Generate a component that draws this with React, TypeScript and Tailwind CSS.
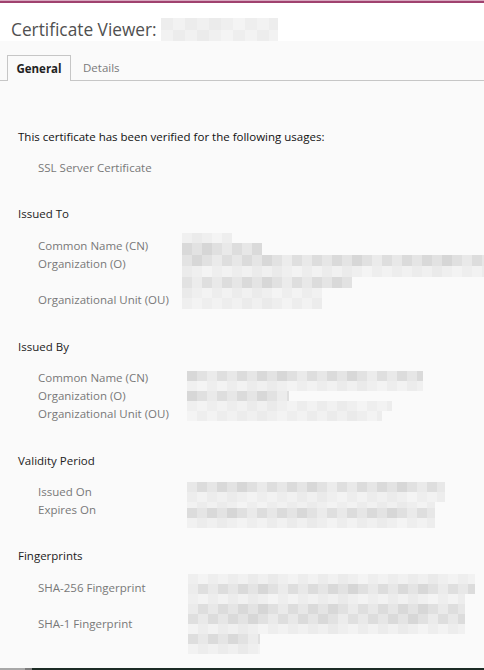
import React from 'react';

type Row = { w: number; h: number; tone: 'd' | 'l' | 'x'; off?: number };

const shade = (seed: number, tone: 'd' | 'l' | 'x') => {
  const r = ((seed * 9301 + 49297) % 233280) / 233280;
  if (tone === 'd') return 214 + Math.round(r * 22);
  if (tone === 'l') return 234 + Math.round(r * 10);
  return 248;
};

const Mosaic: React.FC<{ rows: Row[]; seed: number; cell?: number }> = ({ rows, seed, cell = 10 }) => (
  <div className="flex flex-col">
    {rows.map((row, ri) => {
      const count = Math.ceil(row.w / cell);
      return (
        <div key={ri} className="flex" style={{ height: row.h, marginLeft: row.off ?? 0 }}>
          {Array.from({ length: count }).map((_, ci) => {
            const g = shade(seed + ri * 37 + ci * 11, row.tone);
            return (
              <div
                key={ci}
                style={{ width: ci === count - 1 ? row.w - cell * (count - 1) : cell, background: `rgb(${g},${g},${g})` }}
              />
            );
          })}
        </div>
      );
    })}
  </div>
);

const Label: React.FC<{ children: React.ReactNode; className?: string }> = ({ children, className = '' }) => (
  <div className={`text-[#787878] leading-[18px] whitespace-nowrap ${className}`}>{children}</div>
);

const Heading: React.FC<{ children: React.ReactNode; className?: string }> = ({ children, className = '' }) => (
  <div className={`pl-[18px] text-[#222] leading-[18px] ${className}`}>{children}</div>
);

export default function App() {
  return (
    <div className="h-[670px] w-[484px] flex flex-col bg-[#fafafa] font-['Open_Sans',sans-serif] text-[11.5px] overflow-hidden">
      <div className="h-[1px] bg-[#d7a8bf]" />
      <div className="h-[2px] bg-[#a0426f]" />

      {/* header */}
      <header className="h-[38px] bg-white flex items-end pl-[11px]">
        <h1 className="text-[17.3px] text-[#505050] leading-[24px] mb-[-1px]">Certificate Viewer:</h1>
        <div className="ml-[4px] self-end">
          <Mosaic
            seed={3}
            cell={12}
            rows={[
              { w: 117, h: 12, tone: 'l' },
              { w: 117, h: 11, tone: 'l' },
            ]}
          />
        </div>
      </header>

      {/* tabs */}
      <nav className="mt-[14px] flex items-end border-b border-[#c6c6c6] h-[26px]">
        <div className="ml-[7px] h-[26px] w-[64px] border border-b-0 border-[#c6c6c6] bg-[#fafafa] mb-[-1px] flex items-center justify-center font-bold text-[#222]">
          General
        </div>
        <div className="ml-[12px] h-[25px] flex items-center text-[#7a7a7a]">Details</div>
      </nav>

      <main className="flex-1">
        <div className="mt-[47px] pl-[18px] text-[#111] leading-[18px]">This certificate has been verified for the following usages:</div>
        <Label className="mt-[13px] pl-[38px]">SSL Server Certificate</Label>

        {/* Issued To */}
        <Heading className="mt-[28px]">Issued To</Heading>
        <div className="mt-[10px] h-[78px] flex">
          <div className="w-[182px] pl-[38px] pt-[4px]">
            <Label>Common Name (CN)</Label>
            <Label>Organization (O)</Label>
            <Label className="mt-[18px]">Organizational Unit (OU)</Label>
          </div>
          <Mosaic
            seed={11}
            rows={[
              { w: 50, h: 10, tone: 'l' },
              { w: 80, h: 12, tone: 'd' },
              { w: 302, h: 11, tone: 'd' },
              { w: 302, h: 11, tone: 'l' },
              { w: 170, h: 11, tone: 'd' },
              { w: 140, h: 10, tone: 'l' },
              { w: 140, h: 11, tone: 'l' },
            ]}
          />
        </div>

        {/* Issued By */}
        <Heading className="mt-[27px]">Issued By</Heading>
        <div className="h-[68px] flex">
          <div className="w-[187px] pl-[38px] pt-[13px]">
            <Label>Common Name (CN)</Label>
            <Label>Organization (O)</Label>
            <Label>Organizational Unit (OU)</Label>
          </div>
          <div className="pt-[15px]">
            <Mosaic
              seed={47}
              rows={[
                { w: 236, h: 10, tone: 'd' },
                { w: 236, h: 10, tone: 'l' },
                { w: 102, h: 10, tone: 'd' },
                { w: 205, h: 10, tone: 'l' },
                { w: 195, h: 10, tone: 'l' },
              ]}
            />
          </div>
        </div>

        {/* Validity Period */}
        <Heading className="mt-[28px]">Validity Period</Heading>
        <div className="h-[60px] flex">
          <div className="w-[187px] pl-[38px] pt-[13px]">
            <Label>Issued On</Label>
            <Label>Expires On</Label>
          </div>
          <div className="pt-[12px]">
            <Mosaic
              seed={91}
              rows={[
                { w: 258, h: 10, tone: 'd' },
                { w: 258, h: 10, tone: 'l' },
                { w: 248, h: 6, tone: 'l' },
                { w: 248, h: 10, tone: 'd' },
                { w: 248, h: 10, tone: 'l' },
              ]}
            />
          </div>
        </div>

        {/* Fingerprints */}
        <Heading className="mt-[17px]">Fingerprints</Heading>
        <div className="flex">
          <div className="w-[188px] pl-[38px] pt-[14px]">
            <Label>SHA-256 Fingerprint</Label>
            <Label className="mt-[18px]">SHA-1 Fingerprint</Label>
          </div>
          <div className="pt-[9px]">
            <Mosaic
              seed={133}
              rows={[
                { w: 287, h: 10, tone: 'l' },
                { w: 287, h: 10, tone: 'd' },
                { w: 277, h: 10, tone: 'l' },
                { w: 277, h: 10, tone: 'd' },
                { w: 277, h: 10, tone: 'd' },
                { w: 277, h: 10, tone: 'l' },
                { w: 72, h: 10, tone: 'd' },
                { w: 72, h: 10, tone: 'l' },
              ]}
            />
          </div>
        </div>
      </main>

      <footer className="h-[2px] flex">
        <div className="w-[25px] bg-[#a8a8a8]" />
        <div className="w-[7px] bg-[#7c7c7c]" />
        <div className="flex-1 bg-[#1c2b25]" />
      </footer>
    </div>
  );
}
